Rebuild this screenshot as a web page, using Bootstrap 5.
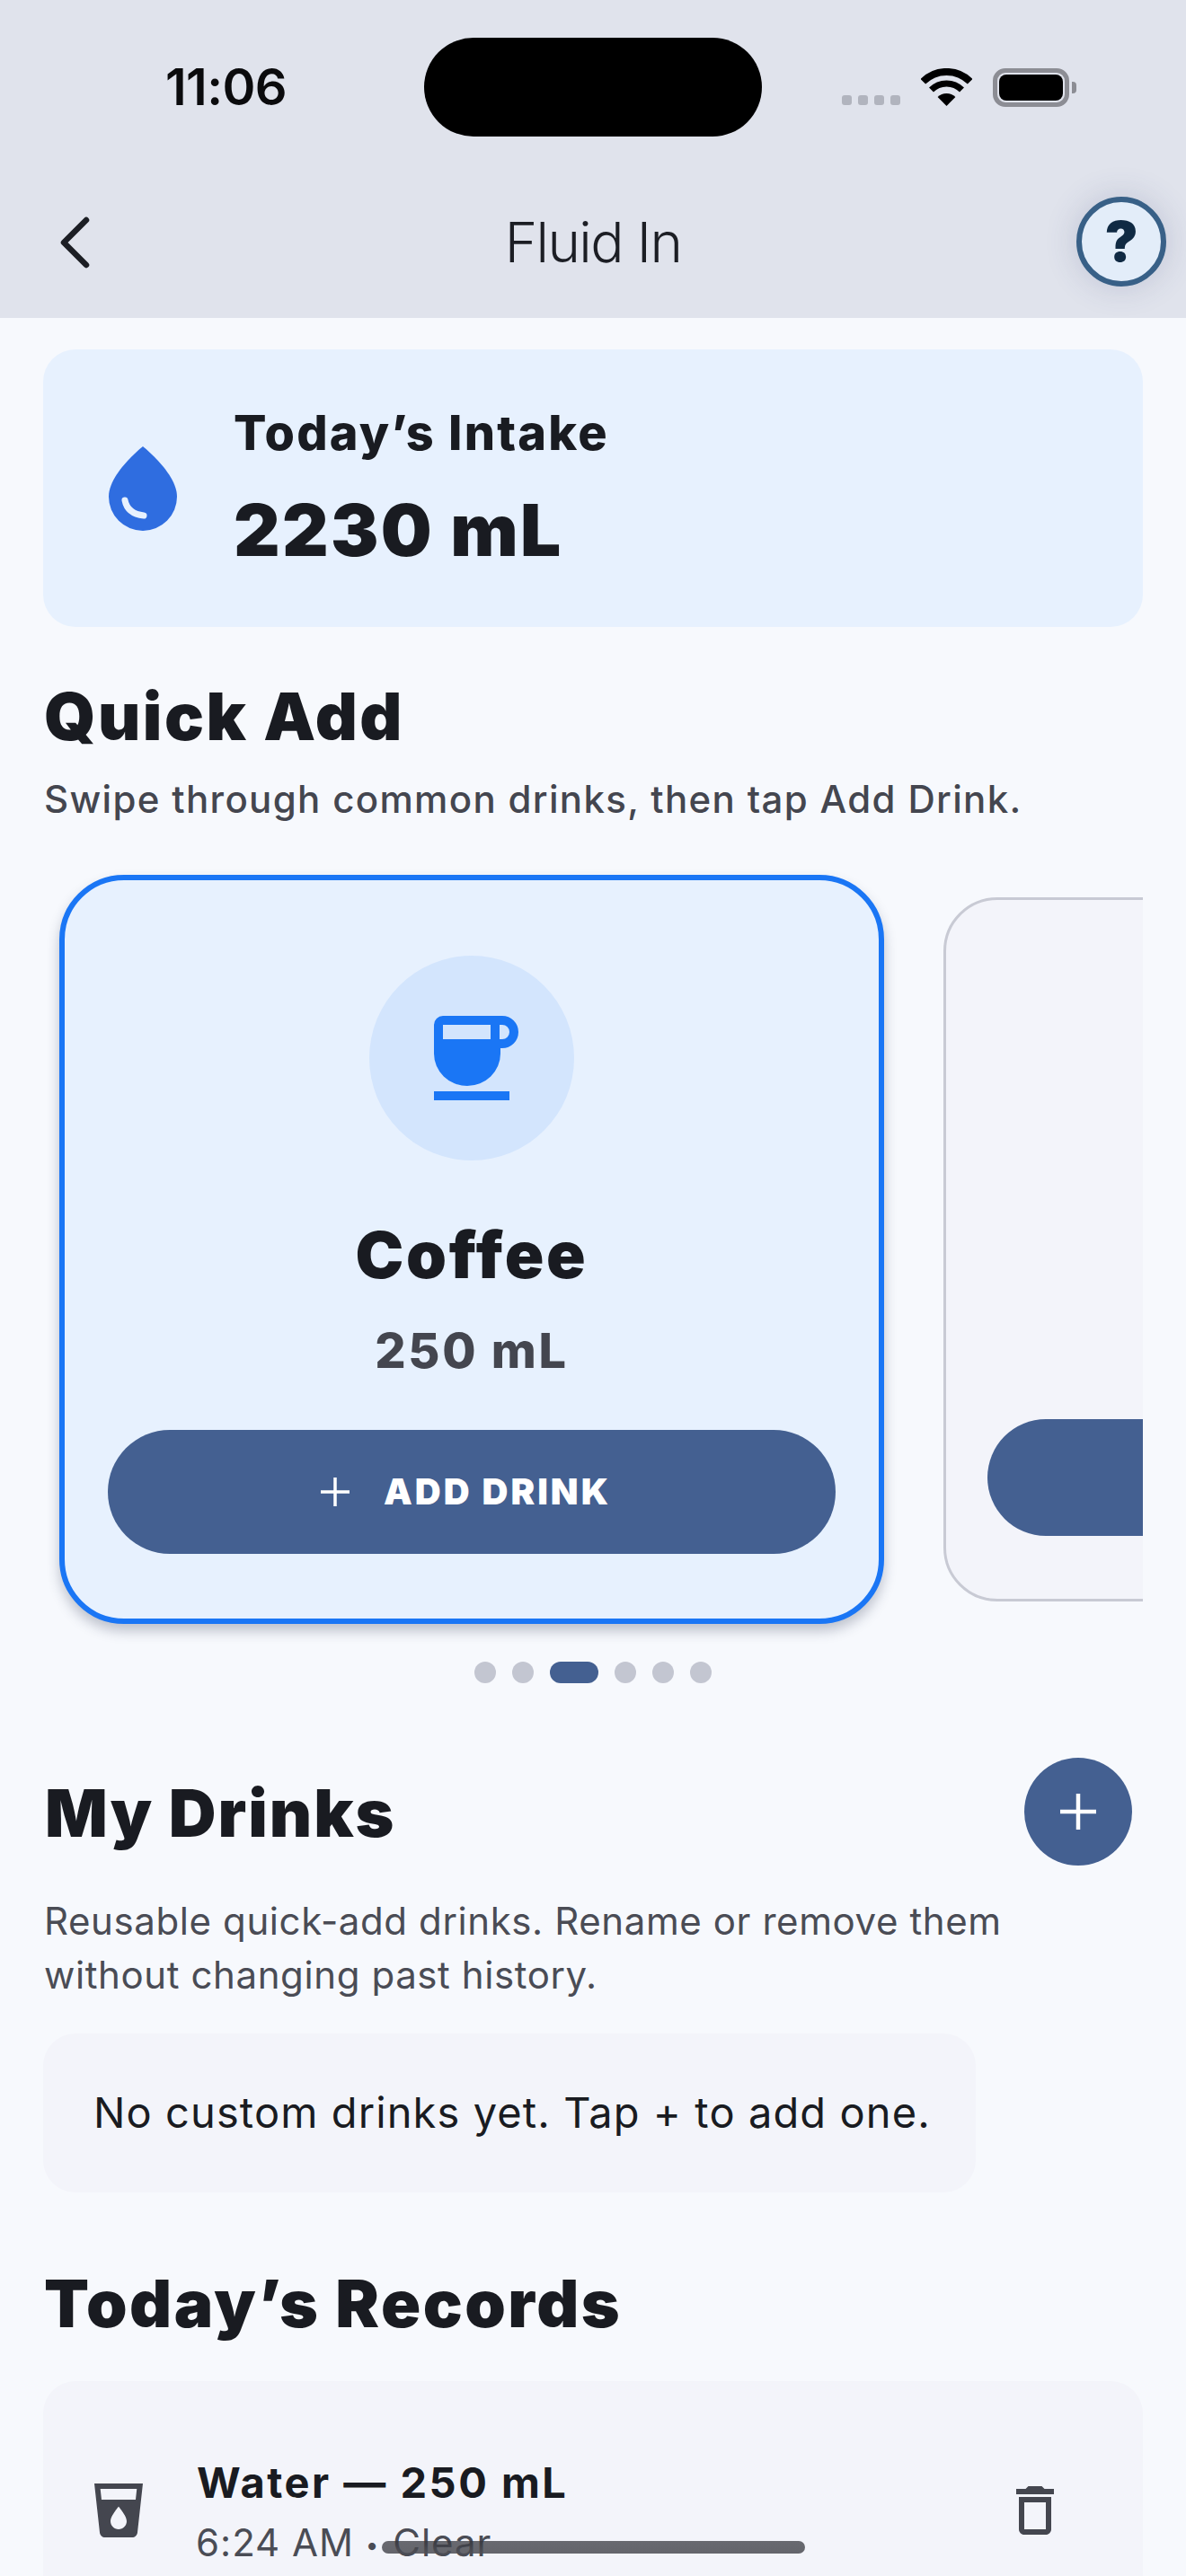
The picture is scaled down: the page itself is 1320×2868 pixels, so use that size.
<!DOCTYPE html>
<html lang="en">
<head>
    <meta charset="UTF-8">
    <meta name="viewport" content="width=device-width, initial-scale=1.0">
    <title>Fluid In</title>
    <link href="https://cdn.jsdelivr.net/npm/bootstrap@5.3.0/dist/css/bootstrap.min.css" rel="stylesheet">
    <style>
        body {
            background-color: #f7f9fd;
            color: #191b21;
            font-family: Inter, "Noto Sans", sans-serif;
            height: 2868px;
            overflow: hidden;
            position: relative;
        }
        .app-head { background: #e0e3ec; height: 354px; position: relative; }
        .status-row { height: 194px; padding: 0 0 0 184px; }
        .clock { font-size: 56px; font-weight: 600; letter-spacing: -.6px; width: 288px; color: #0b0b0d; }
        .island { width: 376px; height: 110px; background: #000; border-radius: 55px; margin-top: -1px; }
        .sig-dots { margin-left: 89px; margin-top: 29px; gap: 7px; width: 65px; }
        .sig-dots i { width: 11px; height: 11px; background: #b1b4be; border-radius: 3px; display: block; }
        .wifi-icon { margin-left: 23px; width: 57px; height: 42px; }
        .batt { margin-left: 23px; width: 85px; height: 43px; border: 5px solid #8c8d94; border-radius: 14px; padding: 2px; }
        .batt b { display: block; height: 100%; background: #000; border-radius: 8px; }
        .batt-nub { width: 5px; height: 13px; margin-left: 3px; background: #8c8d94; border-radius: 0 4px 4px 0; }
        .nav-row { height: 160px; position: relative; }
        .back-icon { position: absolute; left: 64px; top: 44px; }
        .page-title { font-size: 62px; font-weight: 300; letter-spacing: -1.6px; line-height: 80px; color: #1c1e24; margin-top: 36px; }
        .help-btn {
            position: absolute; left: 1198px; top: 219px; width: 100px; height: 100px;
            border: 6px solid #386087; background: #e3edf9; color: #102a43;
            font-size: 62px; font-weight: 900; line-height: 1;
            box-shadow: 0 0 36px rgba(60, 70, 120, .2);
        }
        .wrap-x { margin-left: 48px; margin-right: 48px; }
        .intake-box { background: #e7f1fe; height: 309px; margin-top: 35px; border-radius: 36px; padding-left: 73px; }
        .drop-icon { width: 76px; height: 94px; margin-right: 63px; }
        .intake-text { margin-bottom: 2px; }
        .intake-label { font-size: 54px; font-weight: 800; line-height: 64px; letter-spacing: 2.2px; }
        .intake-num { font-size: 80px; font-weight: 900; line-height: 90px; margin-top: 31px; letter-spacing: 2.3px; }
        .sect-h { font-size: 73px; font-weight: 900; line-height: 80px; letter-spacing: 2.5px; color: #191b21; margin: 0; padding-left: 1px; }
        .sect-sub { font-size: 42px; font-weight: 500; line-height: 60px; margin: 22px 0 0; padding-left: 1px; color: #44464f; letter-spacing: 1.33px; }
        .slider { overflow: hidden; margin-top: 44px; padding: 10px 0 22px 18px; gap: 66px; }
        .drink-on {
            flex: 0 0 918px; height: 834px; background: #e7f1fe; border: 6px solid #1a76f5; border-radius: 72px;
            padding: 84px 48px 0; box-shadow: 0 8px 14px rgba(40, 50, 80, .28);
        }
        .drink-off {
            flex: 0 0 700px; height: 784px; background: #f3f4fa; border: 3px solid #c8cad4; border-radius: 60px;
            padding: 578px 0 0 46px;
        }
        .cup-circle { width: 228px; height: 228px; background: #d3e5fd; }
        .cup-icon { overflow: visible; }
        .drink-name { font-size: 72px; font-weight: 900; line-height: 90px; margin-top: 60px; letter-spacing: 2.7px; }
        .drink-ml { font-size: 54px; font-weight: 800; line-height: 64px; margin-top: 30px; color: #44464f; letter-spacing: 2.7px; }
        .add-btn {
            background: #446091; color: #fff; border: 0; border-radius: 69px; height: 138px; width: 810px;
            margin-top: 56px; padding: 0 14px 0 0; font-size: 40px; font-weight: 900; letter-spacing: 3px;
        }
        .add-btn:hover { background: #446091; color: #fff; }
        .add-plus { margin-right: 37px; }
        .add-stub { background: #446091; height: 130px; border-radius: 65px 0 0 65px; }
        .pager { gap: 18px; margin-top: 20px; }
        .pager i { width: 24px; height: 24px; border-radius: 12px; background: #c3c6d1; display: block; }
        .pager i.on { width: 54px; background: #446091; }
        .drinks-head { margin-top: 83px; height: 120px; padding-right: 12px; }
        .drinks-head .sect-h { letter-spacing: 2px; padding: 4px 0 0 2px; }
        .plus-btn { width: 120px; height: 120px; background: #446091; border: 0; padding: 0; }
        .desc-text { font-size: 42px; font-weight: 400; line-height: 60px; margin: 32px 0 0; padding-left: 1px; color: #4a4c55; letter-spacing: .6px; }
        .empty-box { width: 1038px; height: 177px; background: #f3f4fa; border-radius: 36px; margin-top: 35px; padding-left: 56px; font-size: 47px; letter-spacing: 1.1px; color: #191b21; }
        .records-h { margin-top: 84px; }
        .record-box { background: #f3f4fa; border-radius: 36px; margin-top: 46px; height: 300px; padding: 79px 84px 0 48px; }
        .rec-icon { width: 72px; height: 72px; fill: #44464f; flex: none; }
        .rec-glass { margin-top: 29px; margin-right: 51px; }
        .rec-trash { margin-top: 29px; }
        .rec-title { font-size: 47px; font-weight: 700; line-height: 68px; letter-spacing: 2.5px; }
        .rec-meta { font-size: 42px; line-height: 60px; color: #4a4c55; letter-spacing: 1px; margin-top: 3px; margin-left: -1px; }
        .meta-sep { font-size: 26px; vertical-align: 3px; margin: 0 2px 0 0; }
        .home-bar { position: absolute; left: 425px; top: 2829px; width: 471px; height: 14px; border-radius: 7px; background: linear-gradient(rgba(50, 51, 58, .72), rgba(80, 81, 88, .88)); }
    </style>
</head>
<body>
    <header class="app-head">
        <!-- Status bar -->
        <div class="status-row d-flex align-items-center">
            <div class="clock">11:06</div>
            <div class="island"></div>
            <div class="sig-dots d-flex"><i></i><i></i><i></i><i></i></div>
            <svg class="wifi-icon" viewBox="0 0 57 42">
                <path d="M2.3 14.8A37 37 0 0 1 54.7 14.8" fill="none" stroke="#000" stroke-width="8"/>
                <path d="M11.5 24A24 24 0 0 1 45.5 24" fill="none" stroke="#000" stroke-width="7"/>
                <path d="M28.5 42L18.6 32A14 14 0 0 1 38.4 32Z" fill="#000"/>
            </svg>
            <div class="batt"><b></b></div>
            <div class="batt-nub"></div>
        </div>
        <!-- Title row -->
        <div class="nav-row d-flex align-items-start justify-content-center">
            <svg class="back-icon" width="40" height="68" viewBox="0 0 40 68">
                <path d="M32 7L7 32L32 57" fill="none" stroke="#1c1e24" stroke-width="6.5" stroke-linecap="round" stroke-linejoin="round"/>
            </svg>
            <div class="page-title">Fluid In</div>
        </div>
        <button class="help-btn btn rounded-circle d-flex align-items-center justify-content-center p-0">?</button>
    </header>

    <main>
        <div class="intake-box wrap-x d-flex align-items-center">
            <svg class="drop-icon" viewBox="0 0 76 94">
                <path d="M38 0C38 0 0 30 0 56A38 38 0 0 0 76 56C76 30 38 0 38 0Z" fill="#2f6de0"/>
                <path d="M18 60Q21 75 39 77" fill="none" stroke="#e7f1fe" stroke-width="7" stroke-linecap="round"/>
            </svg>
            <div class="intake-text">
                <div class="intake-label">Today’s Intake</div>
                <div class="intake-num">2230 mL</div>
            </div>
        </div>

        <div class="wrap-x" style="margin-top:60px">
            <h2 class="sect-h">Quick Add</h2>
            <p class="sect-sub">Swipe through common drinks, then tap Add Drink.</p>
        </div>

        <div class="slider wrap-x d-flex align-items-center">
            <div class="drink-on d-flex flex-column align-items-center text-center">
                <div class="cup-circle rounded-circle d-flex align-items-center justify-content-center">
                    <svg class="cup-icon" width="84" height="94" viewBox="0 0 84 94">
                        <path fill="#1a76f5" fill-rule="evenodd" d="M10 0H76A18 18 0 0 1 76 36H74V42A37 36 0 0 1 0 42V10A10 10 0 0 1 10 0ZM10 10V26H63V10ZM73 10V26H76A8 8 0 0 0 76 10Z"/>
                        <rect y="84" width="84" height="10" fill="#1a76f5"/>
                    </svg>
                </div>
                <div class="drink-name">Coffee</div>
                <div class="drink-ml">250 mL</div>
                <button class="add-btn btn d-flex align-items-center justify-content-center">
                    <svg class="add-plus" width="34" height="34" viewBox="0 0 34 34"><path d="M17 1V33M1 17H33" stroke="#fff" stroke-width="3.5"/></svg>
                    ADD DRINK
                </button>
            </div>
            <div class="drink-off">
                <div class="add-stub"></div>
            </div>
        </div>

        <div class="pager d-flex justify-content-center">
            <i></i><i></i><i class="on"></i><i></i><i></i><i></i>
        </div>

        <div class="drinks-head wrap-x d-flex align-items-center justify-content-between">
            <h2 class="sect-h">My Drinks</h2>
            <button class="plus-btn btn rounded-circle d-flex align-items-center justify-content-center">
                <svg width="44" height="44" viewBox="0 0 44 44"><path d="M22 2V42M2 22H42" stroke="#fff" stroke-width="4.5"/></svg>
            </button>
        </div>
        <div class="wrap-x">
            <p class="desc-text">Reusable quick-add drinks. Rename or remove them<br>without changing past history.</p>
            <div class="empty-box d-flex align-items-center">No custom drinks yet. Tap + to add one.</div>
            <h2 class="sect-h records-h">Today’s Records</h2>
            <div class="record-box d-flex align-items-start">
                <svg class="rec-icon rec-glass" viewBox="0 0 24 24"><path d="M3 2l2.01 18.23C5.13 21.23 5.97 22 7 22h10c1.03 0 1.87-.77 1.99-1.77L21 2H3zm9 17c-1.66 0-3-1.34-3-3 0-2 3-5.4 3-5.4s3 3.4 3 5.4c0 1.66-1.34 3-3 3zm6.33-11H5.67l-.44-4h13.53l-.43 4z"/></svg>
                <div class="flex-grow-1">
                    <div class="rec-title">Water — 250 mL</div>
                    <div class="rec-meta">6:24 AM <span class="meta-sep">•</span> Clear</div>
                </div>
                <svg class="rec-icon rec-trash" viewBox="0 0 24 24"><path d="M6 19c0 1.1.9 2 2 2h8c1.1 0 2-.9 2-2V7H6v12zM8 9h8v10H8V9zm7.5-5l-1-1h-5l-1 1H5v2h14V4z"/></svg>
            </div>
        </div>
    </main>

    <div class="home-bar"></div>

    <script src="https://cdn.jsdelivr.net/npm/bootstrap@5.3.0/dist/js/bootstrap.bundle.min.js"></script>
</body>
</html>
